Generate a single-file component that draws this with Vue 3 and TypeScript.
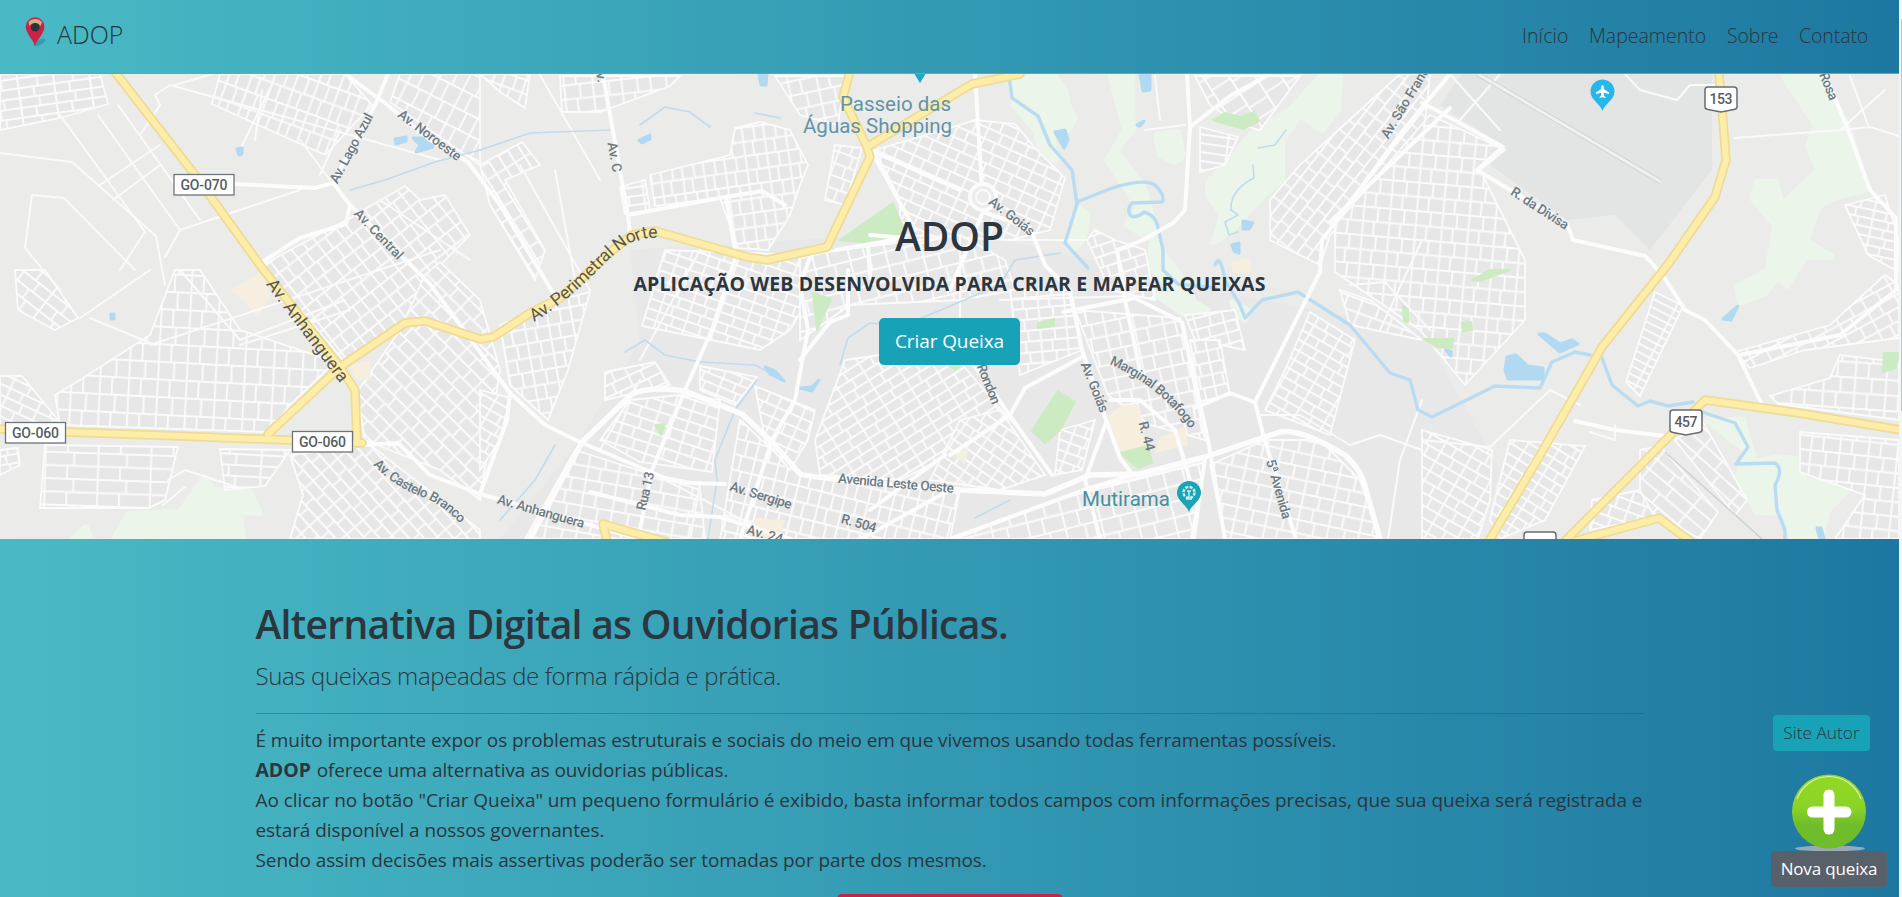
<script setup lang="ts">
interface District { pts: string; a: number; w: number; h: number }
interface Label { t: string; x: number; y: number; a: number; s?: number; len?: number; k?: string }

const links: { text: string; cls: string }[] = [
  { text: 'Início', cls: 'l1' },
  { text: 'Mapeamento', cls: 'l2' },
  { text: 'Sobre', cls: 'l3' },
  { text: 'Contato', cls: 'l4' },
]

const d = (pts: string, a: number, w: number, h: number): District => ({ pts, a, w, h })

// Neighbourhood blocks: outline, street direction and block size
const districts: District[] = [
  d('0,74 100,74 108,104 60,118 0,130', -8, 15, 9),
  d('220,74 345,74 372,105 325,155 212,104', 20, 9, 15),
  d('400,74 480,74 480,165 390,102', 27, 11, 17),
  d('262,265 350,218 405,186 420,200 445,195 470,235 425,280 400,330 345,362', -38, 10, 13),
  d('400,330 425,275 440,262 480,300 500,370 480,500 440,470 365,440 357,392', 45, 14, 11),
  d('175,270 200,270 240,330 335,362 290,405 268,432 60,425 55,395 80,380 150,335', 3, 12, 16),
  d('0,376 22,376 62,425 0,430', 25, 14, 9),
  d('0,450 18,448 20,465 0,475', -10, 9, 8),
  d('45,445 178,447 165,500 148,508 40,508', 2, 22, 12),
  d('220,449 290,450 265,486 225,490', 3, 23, 10),
  d('290,455 370,445 480,530 480,539 290,539 303,495', 48, 13, 10),
  d('15,270 45,270 78,318 55,330 18,310', 38, 15, 10),
  d('480,74 530,74 525,108 500,92', 20, 9, 12),
  d('560,76 680,76 670,86 600,112 562,112', -6, 12, 13),
  d('480,165 522,142 540,165 505,180 545,250 535,280 490,205', 58, 13, 10),
  d('650,175 730,155 735,128 760,122 790,130 808,165 800,185 790,215 768,250 738,248 720,198 655,206', -8, 9, 13),
  d('620,187 645,180 650,210 625,214', -8, 14, 8),
  d('775,76 845,76 838,125 800,115', -12, 12, 13),
  d('835,145 862,148 845,205 825,200', 20, 12, 11),
  d('875,150 960,125 975,120 1015,124 1035,148 1065,178 1050,230 1010,240 900,235 900,200', 24, 12, 10),
  d('1087,240 1095,230 1115,240 1145,250 1155,300 1110,290', -18, 12, 10),
  d('1195,76 1300,76 1260,130 1240,125 1210,105', 57, 13, 20),
  d('1200,127 1238,137 1225,165 1200,172', 8, 30, 8),
  d('1270,200 1300,165 1400,74 1430,74 1422,150 1330,235 1320,265 1270,240', -52, 13, 10),
  d('1335,225 1430,115 1505,150 1480,170 1525,260 1525,320 1465,385 1420,330 1335,272', 5, 11, 13),
  d('1310,312 1355,340 1330,435 1265,410 1285,370', 30, 12, 9),
  d('1265,440 1320,440 1360,480 1380,539 1225,539 1210,465', 12, 13, 12),
  d('665,250 800,255 825,270 790,330 760,350 642,326', 19, 12, 9),
  d('800,255 960,235 1005,260 1015,290 960,300 850,305 800,340', -14, 15, 13),
  d('845,360 880,355 960,362 1010,420 950,455 900,480 820,475 815,440', -32, 13, 9),
  d('960,420 1000,410 1045,475 1000,490 930,480', 35, 11, 9),
  d('1010,290 1068,290 1082,350 1020,375', -5, 11, 10),
  d('1075,310 1180,318 1205,440 1150,425 1108,395', -12, 12, 13),
  d('1185,315 1235,310 1245,350 1195,340', -15, 12, 10),
  d('1190,340 1220,340 1230,395 1200,402', -12, 10, 11),
  d('630,400 680,395 720,400 712,472 640,462 600,440', 18, 13, 10),
  d('740,420 800,475 960,490 950,539 720,539', 14, 10, 14),
  d('575,450 700,490 705,539 525,539', 10, 13, 12),
  d('500,325 560,300 590,292 568,370 548,420 510,385', -10, 10, 13),
  d('480,390 510,398 500,440 480,470', 30, 13, 9),
  d('605,372 655,362 670,385 605,400', -25, 13, 10),
  d('700,366 757,377 735,405 700,390', 22, 14, 8),
  d('755,386 815,410 808,440 790,470 765,440', 24, 11, 10),
  d('955,539 1085,490 1205,462 1195,539', -14, 15, 14),
  d('1060,430 1095,420 1082,470 1055,475', 20, 12, 9),
  d('1655,292 1683,306 1640,396 1626,382', 27, 26, 7),
  d('1735,352 1830,325 1885,275 1899,285 1899,338 1805,350 1750,368', -28, 13, 11),
  d('1770,396 1830,378 1840,355 1899,362 1899,420 1778,404', 4, 13, 14),
  d('1800,432 1899,440 1899,539 1835,539 1865,495 1800,472', 6, 12, 13),
  d('1845,205 1885,195 1899,240 1899,272 1868,255', 12, 13, 8),
  d('1422,430 1492,450 1490,500 1478,539 1422,539', 30, 12, 10),
  d('1510,440 1585,446 1545,520 1500,539 1490,520', 32, 12, 9),
  d('1640,450 1660,446 1718,512 1700,539 1640,505', 40, 24, 11),
  d('1675,440 1702,420 1747,500 1735,515', 42, 24, 11),
  d('1592,500 1640,490 1655,518 1590,530', 20, 12, 10),
  d('1370,300 1422,340 1350,325 1340,290', 20, 14, 12),
]

const avenues: string[] = [
  'M345 74L385 103L430 140L468 162L500 205L555 296',
  'M388 74L376 103L333 183L350 205L430 284L480 352L510 393L545 425L580 442L665 478L690 483L725 484',
  'M235 184L315 188L333 183',
  'M350 205L346 224L300 238L262 262',
  'M362 445L398 443L430 475L480 494L640 539',
  'M480 494L507 420L510 393',
  'M603 75L628 215L630 236',
  'M628 215L725 197L762 191L785 205',
  'M726 197L736 255L712 330L685 390L652 470L638 539',
  'M975 74L982 190M983 212L1030 228L1045 265L1070 290L1082 350L1106 420L1120 458L1132 474',
  'M870 150L960 190M872 152L915 230M983 212L950 290',
  'M836 250L905 238L870 235M868 245L870 275',
  'M812 252L800 285L808 330L795 400L772 440L740 539',
  'M848 270L848 315L830 322L800 360',
  'M1187 74L1190 127L1185 210L1173 223L1143 240L1117 250L1125 300L1140 370',
  'M1190 127L1230 96L1270 74',
  'M1450 74L1405 128L1322 240L1320 272L1255 402L1264 438L1296 539',
  'M1450 108L1330 222',
  'M1063 312L1135 298L1182 322L1208 440L1225 539',
  'M1254 402L1230 393L1195 408',
  'M1082 357L1025 388L1010 415L950 455',
  'M960 345L1052 475',
  'M1106 423L1085 480L1100 539M1110 400L1140 400L1175 430L1190 480',
  'M950 539L1090 488L1140 473M1205 460L1192 539',
  'M590 492L680 515L720 517L790 539',
  'M950 490L850 545M945 455L870 510',
  'M1422 103L1436 110L1503 147L1477 170L1567 224L1573 240L1645 256L1660 272',
  'M1662 274L1685 310L1705 320L1738 355L1762 405',
  'M1825 74L1850 135L1870 190L1896 218L1896 290L1840 335L1740 355',
  'M1575 421L1615 430L1665 436',
]

const lanes: string[] = [
  'M0 153L72 162L156 236L165 285M165 257L180 230L300 190M60 115L145 232M98 115L180 230M118 105L200 220M155 95L170 85L440 160',
  'M145 232L120 270M32 195L64 198L135 270M32 195L25 248L60 290M100 185L160 145M113 200L160 165',
  'M155 95L160 105L140 135M212 74L172 86M262 90L255 140M240 150L270 88',
  'M80 318L150 270M90 318L155 345',
  'M540 75L600 180M555 170L575 280M520 165L590 290',
  'M1145 130L1185 125M1155 76L1160 120',
  'M1350 285L1385 282L1430 330M1422 240L1380 330',
  'M1625 74L1640 90L1677 100L1690 85L1720 85',
  'M1735 138L1840 130L1870 127L1899 136M1850 76L1868 125M1885 90L1840 130',
  'M1422 440L1490 447L1550 390L1580 405M1590 432L1615 440L1615 425',
  'M1500 74L1460 120M1450 74L1500 130',
  'M300 140L330 180M320 175L340 130',
  'M1260 415L1300 415L1350 445L1380 435L1422 450M1388 539L1400 460L1422 400',
  'M168 480L185 470L240 488M163 505L185 487',
  'M600 450L640 380M665 480L780 539M700 484L690 539',
  'M380 200L470 260M180 270L240 340L345 300M240 345L350 310M150 345L440 250',
  'M700 250L640 360M960 235L960 330M1010 240L1085 240M1000 300L1130 296',
]

const highways: string[] = [
  'M115 72L195 175L262 268L340 367L355 390L357 443',
  'M0 429L66 432L180 436L362 443',
  'M268 434L340 367L405 323L425 321L480 339L493 337L530 313L560 298L613 250L632 235L655 231L747 257L767 260L827 247L870 157L867 147L843 97L850 72',
  'M867 147L960 91L972 84L1020 74',
  'M1719 74L1724 133L1726 160L1715 197L1669 263L1602 347L1589 370L1539 457L1489 541',
  'M1565 541L1640 466L1695 410L1705 400L1799 413L1901 430',
  'M1575 541L1659 518L1690 541',
  'M666 542L603 524L607 541',
]

const rivers: string[] = [
  'M1009 76L1012 98L1038 116L1050 145L1072 170L1077 204',
  'M1077 202L1112 188Q1145 178 1155 185Q1166 196 1162 202L1132 203Q1126 210 1131 216Q1138 218 1144 212Q1156 215 1158 228L1163 250L1163 270L1178 284L1215 288M1077 204L1065 243L1088 268',
  'M1215 265Q1220 252 1225 280L1240 305L1245 318L1262 300L1298 292L1350 325L1390 373L1410 380L1418 410L1432 417L1495 386L1540 388L1552 362L1575 352L1590 355',
  'M1602 358L1612 385L1638 406L1650 401L1668 406L1693 402M1702 412L1735 423L1748 447L1736 464L1775 463Q1784 469 1775 485L1777 510L1785 530V539',
]
const streams: string[] = [
  'M480 150L530 133L610 130M640 125L665 107L690 112L710 127M755 113L780 118',
  'M350 190L385 180L435 162L480 150',
  'M625 352L645 340L665 355L700 362L755 365L770 373M757 380L735 410L715 460L717 480L708 539',
  'M555 445L535 480L500 520M840 365L848 338L870 323L905 325L1000 285L1015 260L1060 253',
  'M1253 165L1254 178Q1230 190 1231 210L1238 215L1225 222L1229 235L1238 232M1286 130L1275 145L1258 148',
  'M975 518L1010 500',
]
const water: string[] = [
  '1055,132 1065,130 1068,140 1064,148', '1140,74 1150,74 1150,90 1143,91', '1243,221 1253,223 1249,229 1243,229',
  '1232,245 1239,243 1239,253 1234,251', '1507,357 1516,355 1528,366 1543,368 1543,379 1508,379 1505,370',
  '1539,334 1545,334 1560,344 1572,340 1578,344 1560,352', '1723,319 1738,306 1731,320',
  '1446,350 1451,352 1451,356', '1817,528 1821,528 1824,539 1820,539', '395,139 406,137 406,141 396,144',
  '413,138 426,138 431,143 433,147 416,152 420,145', '237,149 242,148 242,154 239,155', '111,314 114,314 114,319 111,319',
  '759,74 767,74 766,85 761,85', '639,140 650,135 650,139 642,143', '765,367 775,371 784,381 770,374', '800,388 812,387 819,380 812,391',
  '1137,125 1144,121 1140,126',
]
const parks: string[] = [
  '840,240 893,203 902,225 905,232 870,243', '813,293 831,299 817,330', '655,425 665,424 661,435',
  '1213,120 1225,113 1240,117 1254,112 1259,121 1243,129', '1038,323 1054,319 1054,326 1038,328',
  '1058,391 1075,402 1060,430 1045,443 1032,431', '1120,453 1148,446 1152,463 1138,468',
  '1472,280 1490,270 1510,270 1480,281', '1462,323 1471,322 1472,330 1463,331', '1424,339 1453,339 1452,348 1436,347',
  '1884,353 1899,353 1896,368 1883,372', '1403,306 1408,308 1408,322 1404,321', '950,366 960,365 956,370',
]
const meadows: string[] = [
  '1010,78 1055,76 1065,90 1068,105 1075,118 1068,130 1050,125 1056,160 1042,155 1035,130 1014,105',
  '1110,74 1132,74 1133,130 1116,150 1143,185 1152,215 1160,250 1188,285 1197,310 1180,300 1150,265 1152,240 1127,225 1138,207 1107,160 1125,130',
  '1156,135 1178,132 1183,155 1175,162 1160,155', '1208,182 1230,160 1250,135 1290,110 1320,77 1340,77 1338,110 1322,130 1300,115 1282,140 1282,180 1262,197 1230,232 1214,242 1222,215 1208,195',
  '1080,208 1088,215 1083,240 1075,248 1067,240', '1784,77 1820,77 1850,130 1866,190 1840,196 1820,205 1806,240 1832,257 1805,257 1787,286 1768,268 1775,225 1752,198 1757,182 1776,182 1782,205 1818,170 1808,145 1816,125',
  '1737,287 1765,272 1778,277 1765,293 1740,303', '1707,420 1743,420 1755,462 1780,457 1806,460 1803,482 1840,477 1848,490 1828,510 1820,539 1792,539 1785,513 1757,512 1737,480 1745,450',
  '73,539 86,527 90,539', '114,539 128,514 180,512 205,477 213,490 250,492 260,513 240,512 243,539', '1152,292 1190,300 1208,310 1200,320 1182,313',
  '1232,302 1248,310 1245,320 1237,315',
]
const sand: string[] = [
  '1107,417 1122,405 1138,405 1148,450 1118,453', '1160,437 1185,427 1188,445 1155,453', '230,290 262,272 270,295 258,318 245,302',
  '350,365 370,360 370,380 355,380', '755,518 785,520 780,539 750,535', '955,455 968,448 965,465', '1230,262 1250,258 1252,272 1234,274',
]

const labels: Label[] = [
  { t: 'Av. Lago Azul', x: 351, y: 148, a: -62, len: 77 },
  { t: 'Av. Noroeste', x: 430, y: 135, a: 37, len: 75 },
  { t: 'Av. Central', x: 379, y: 234, a: 46, len: 64 },
  { t: 'Av. C', x: 615, y: 157, a: 80, len: 30 },
  { t: 'Av.', x: 601, y: 73, a: 80, len: 19 },
  { t: 'Av. Goiás', x: 1012, y: 216, a: 38, len: 54 },
  { t: 'Av. São Francisco', x: 1411, y: 92, a: -59, len: 105 },
  { t: 'R. da Divisa', x: 1540, y: 208, a: 33, len: 66 },
  { t: 'Rosa', x: 1829, y: 86, a: 68, len: 29 },
  { t: 'Av. Anhanguera', x: 541, y: 511, a: 16, len: 90 },
  { t: 'Rua 13', x: 645, y: 491, a: -77, len: 39 },
  { t: 'Av. Sergipe', x: 761, y: 495, a: 17, len: 64 },
  { t: 'Avenida Leste Oeste', x: 896, y: 483, a: 5, len: 116 },
  { t: 'R. 504', x: 859, y: 523, a: 16, len: 36 },
  { t: 'Av. 24', x: 765, y: 534, a: 16, len: 37 },
  { t: 'Rondon', x: 989, y: 384, a: 68, len: 42 },
  { t: 'Av. Goiás', x: 1095, y: 387, a: 68, len: 53 },
  { t: 'R. 44', x: 1147, y: 436, a: 75, len: 30 },
  { t: '5ª Avenida', x: 1279, y: 489, a: 74, len: 61 },
  { t: 'Av. Anhanguera', x: 308, y: 330, a: 53, s: 17.5, len: 124, k: 'dark' },
]
const plates: { t: string; x: number; y: number }[] = [
  { t: 'GO-070', x: 174, y: 174.5 },
  { t: 'GO-060', x: 5.5, y: 422.5 },
  { t: 'GO-060', x: 292.5, y: 431.5 },
]
const shields: { t: string; x: number; y: number }[] = [
  { t: '153', x: 1705, y: 87 },
  { t: '457', x: 1670, y: 410 },
  { t: '', x: 1524, y: 532 },
]
</script>

<template>
  <div class="window">
    <div class="page">
      <header class="navbar">
        <a class="brand">
          <svg class="pin" width="30" height="32" viewBox="0 0 30 32">
            <ellipse cx="14.500" cy="25.500" rx="6.500" ry="2.500" transform="rotate(-28 14.500 25.500)" fill="#20819a" opacity=".5" />
            <path d="M10 29C8 22 .8 17 .8 9.500a9.300 9.300 0 0 1 18.600 0C19.400 17 12 22 10 29z" fill="#cb2347" />
            <path d="M3.500 5A9 9 0 0 1 17 5L15.500 9L13 6.500H7L4.500 9z" fill="#cfb183" />
            <circle cx="10.200" cy="10.200" r="4.300" fill="#26343d" />
          </svg>
          <span>ADOP</span>
        </a>
        <nav class="links">
          <a v-for="l in links" :key="l.text" :class="l.cls">{{ l.text }}</a>
        </nav>
      </header>

      <section class="hero">
        <svg class="map" viewBox="0 74 1899 465" width="1899" height="465">
          <defs>
            <pattern v-for="(b, i) in districts" :id="'g' + i" :key="i" :width="b.w * 2.4" :height="b.h * 2.2"
              patternUnits="userSpaceOnUse" :patternTransform="`rotate(${b.a})`">
              <rect :width="b.w * 2.4" :height="b.h * 2.2" fill="#e7e7e7" />
              <path :d="`M0 1H${b.w * 2.4}M0 ${b.h * 1.1 + 1}H${b.w * 2.4}M${b.w * 0.4} 0V${b.h * 2.2}M${b.w * 1.7} 0V${b.h * 1.1 + 1}M${b.w * 1.4} ${b.h * 1.1 + 1}V${b.h * 2.2}`"
                fill="none" stroke="#fbfbfb" stroke-width="1.9" />
            </pattern>
            <path id="perimetral" d="M534 322Q567 302 597 271T638 241Q648 236 668 239" />
            <path id="castelo" d="M373 465Q395 487 420 496T464 528" />
            <path id="botafogo" d="M1109 364Q1162 387 1192 432" />
          </defs>
          <rect y="74" width="1899" height="465" fill="#ebebea" />
          <path d="M630 250L960 230L1260 300L1422 330L1500 470L1480 539H500L580 440L640 340Z" fill="#e8e8e8" />
          <path d="M1462 74H1712V170L1650 250L1615 215L1567 220L1490 165L1505 147L1440 105Z" fill="#e3e5e5" />
          <polygon v-for="(p, i) in meadows" :key="'m' + i" :points="p" class="meadow" />
          <polygon v-for="(b, i) in districts" :key="'d' + i" :points="b.pts" :fill="`url(#g${i})`" class="block" />
          <polygon v-for="(p, i) in sand" :key="'s' + i" :points="p" fill="#f6efdf" />
          <polygon v-for="(p, i) in parks" :key="'p' + i" :points="p" class="park" />
          <path v-for="(p, i) in lanes" :key="'l' + i" :d="p" class="lane" />
          <path v-for="(p, i) in streams" :key="'t' + i" :d="p" class="stream" />
          <path v-for="(p, i) in rivers" :key="'r' + i" :d="p" class="river" />
          <polygon v-for="(p, i) in water" :key="'w' + i" :points="p" class="water" />
          <path v-for="(p, i) in avenues" :key="'a' + i" :d="p" class="avenue" />
          <circle cx="983" cy="197" r="13" fill="#ececec" stroke="#fbfbfb" stroke-width="4" />
          <circle cx="983" cy="197" r="7" fill="none" stroke="#fbfbfb" stroke-width="2" />
          <path d="M530 539L582 442L632 394Q650 386 685 391L742 414L772 442L800 474Q815 479 960 490L1045 494L1090 475L1140 474L1205 457L1280 432Q1300 428 1345 455Q1362 470 1366 490L1380 539" class="trunk" />
          <path d="M1478 74L1661 182" stroke="#cfd4d4" stroke-width="5" />
          <path d="M1478 74L1661 182" stroke="#eff0f0" stroke-width="3" />
          <path d="M1665 452L1762 539" stroke="#cdd2d4" stroke-width="1.500" />
          <path v-for="(p, i) in highways" :key="'he' + i" :d="p" class="highway-edge" />
          <path v-for="(p, i) in highways" :key="'h' + i" :d="p" class="highway" />

          <g v-for="(p, i) in plates" :key="'pl' + i">
            <rect :x="p.x" :y="p.y" width="60" height="20.500" fill="#fff" stroke="#6d7479" stroke-width="1.300" />
            <text :x="p.x + 30" :y="p.y + 15.500" class="plate" textLength="47">{{ p.t }}</text>
          </g>
          <g v-for="(s, i) in shields" :key="'sh' + i">
            <path :d="`M${s.x + 3} ${s.y}h26q3 0 3 3v17q0 2-3 2.500l-13 2.500l-13-2.500q-3-.5-3-2.500v-17q0-3 3-3z`"
              fill="#fff" stroke="#666c70" stroke-width="1.500" />
            <text v-if="s.t" :x="s.x + 16" :y="s.y + 17" class="plate" textLength="23">{{ s.t }}</text>
          </g>
          <text v-for="(l, i) in labels" :key="'lb' + i" :class="['label', l.k]" :font-size="l.s ?? 13.5" :textLength="l.len"
            :transform="`translate(${l.x} ${l.y}) rotate(${l.a})`" :dy="(l.s ?? 13.5) * 0.36">{{ l.t }}</text>
          <text class="curve dark" font-size="17.500"><textPath href="#perimetral" textLength="153">Av. Perimetral Norte</textPath></text>
          <text class="curve" font-size="13.500"><textPath href="#castelo" textLength="106">Av. Castelo Branco</textPath></text>
          <text class="curve" font-size="13.500"><textPath href="#botafogo" textLength="105">Marginal Botafogo</textPath></text>
          <text x="840" y="110.500" class="place" textLength="111">Passeio das</text>
          <text x="803" y="133" class="place" textLength="149">Águas Shopping</text>
          <text x="1082" y="505.500" class="place teal" textLength="88">Mutirama</text>

          <path d="M912 70h16l-8 13z" fill="#1fa9c8" />
          <path d="M1602.500 111c-2-7-12-11-12-19.500a12 12 0 0 1 24 0c0 8.500-10 12.500-12 19.500z" fill="#29b6ea" />
          <path d="M1602.500 85c1 0 1.300 1.500 1.300 4l5.200 3.500v1.500l-5.200-1.300v3l1.700 1.300v1l-3-.8l-3 .8v-1l1.700-1.300v-3l-5.200 1.300v-1.500l5.200-3.500c0-2.500.3-4 1.300-4z" fill="#fff" />
          <path d="M1189 512c-2-7-12-11-12-19a12 12 0 0 1 24 0c0 8-10 12-12 19z" fill="#1ba3b8" />
          <circle cx="1189" cy="492.500" r="5.500" fill="none" stroke="#cdeef2" stroke-width="2.500" stroke-dasharray="3 1.300" />
          <path d="M1189 491v7M1186 499h6M1187 491h4" stroke="#cdeef2" stroke-width="1.500" />
        </svg>
        <div class="hero-text">
          <h1>ADOP</h1>
          <p>APLICAÇÃO WEB DESENVOLVIDA PARA CRIAR E MAPEAR QUEIXAS</p>
          <button>Criar Queixa</button>
        </div>
      </section>

      <main class="about">
        <div class="container">
          <h2>Alternativa Digital as Ouvidorias Públicas.</h2>
          <p class="lead">Suas queixas mapeadas de forma rápida e prática.</p>
          <hr />
          <div class="copy">
            <p class="c1">É muito importante expor os problemas estruturais e sociais do meio em que vivemos usando todas ferramentas possíveis.</p>
            <p class="c2"><b>ADOP</b> oferece uma alternativa as ouvidorias públicas.</p>
            <p class="c3">Ao clicar no botão "Criar Queixa" um pequeno formulário é exibido, basta informar todos campos com informações precisas, que sua queixa será registrada e</p>
            <p class="c4">estará disponível a nossos governantes.</p>
            <p class="c5">Sendo assim decisões mais assertivas poderão ser tomadas por parte dos mesmos.</p>
          </div>
          <div class="cta"></div>
        </div>
      </main>

      <aside class="floating">
        <a class="author">Site Autor</a>
        <svg class="add" width="76" height="80" viewBox="0 0 76 80">
          <defs>
            <linearGradient id="lime" x1="0" y1="0" x2="0" y2="1">
              <stop offset="0" stop-color="#92d924" />
              <stop offset=".45" stop-color="#8bd326" />
              <stop offset=".68" stop-color="#70bd2b" />
              <stop offset="1" stop-color="#6fbd2c" />
            </linearGradient>
          </defs>
          <ellipse cx="39" cy="74.500" rx="35" ry="3" fill="#9aa9b3" />
          <circle cx="38" cy="37.500" r="37" fill="url(#lime)" />
          <path d="M6 25A34 34 0 0 1 70 25" fill="none" stroke="#dcefae" stroke-width="1.200" />
          <path d="M38 21V55M21.500 38H55" stroke="#fff" stroke-width="11" stroke-linecap="round" />
          <path d="M34 16.500h8v43h-8zM17 34h42v8h-42z" fill="#fff" />
        </svg>
        <span class="tip">Nova queixa</span>
      </aside>
    </div>
    <div class="scroll"><div class="thumb"></div></div>
  </div>
</template>

<style>
body { margin: 0; background: #f1f1f1; }
</style>

<style scoped>
.window {
  width: 1902px; height: 897px; display: flex; overflow: hidden;
  font-family: "Open Sans", "Noto Sans", sans-serif; font-size: 19px; color: #2b363e;
}
.page { position: relative; width: 1899px; height: 897px; overflow: hidden; }
.scroll { width: 3px; background: #f4f5f5; padding-top: 19px; box-sizing: border-box; }
.thumb { width: 1px; height: 392px; margin-left: 2px; background: #c1c5c7; }
h1, h2, p { margin: 0; white-space: nowrap; }
.navbar {
  height: 74px; box-sizing: border-box; border-bottom: 1px solid #7f9da5; padding: 0 31px 0 25px;
  background: linear-gradient(to right, #49bac5, #1d78a1);
  display: flex; justify-content: space-between; align-items: flex-start;
}
.brand { display: flex; font-size: 25px; font-weight: 350; line-height: 34px; padding-top: 17px; color: #28353b; }
.pin { margin-right: 2px; }
.links { display: flex; gap: 21px; font-weight: 350; font-size: 19.5px; line-height: 30px; padding-top: 21px; }
.links a { white-space: nowrap; }
.l1 { width: 46px; letter-spacing: .1px; }
.l2 { width: 117px; }
.l3 { width: 51px; letter-spacing: -.1px; }
.l4 { width: 69px; letter-spacing: -.1px; }
.hero { position: relative; height: 465px; }
.map { display: block; }
.hero-text {
  position: absolute; inset: 0; display: flex; flex-direction: column; align-items: center;
}
h1 { font-size: 39px; font-weight: 600; line-height: 48px; margin-top: 138px; }
.hero-text p { font-size: 19.5px; font-weight: 700; line-height: 30px; margin-top: 9px; letter-spacing: .13px; }
button {
  width: 141px; height: 47px; margin-top: 19px; padding: 0; border: 0; border-radius: 5px;
  background: #18a2b8; color: #fff; font: 400 19px/47px "Open Sans", sans-serif; letter-spacing: -.1px;
}
.about { height: 358px; background: linear-gradient(to right, #49bac5, #1d78a1); }
.container { width: 1388px; margin: 0 auto; padding-top: 61px; }
h2 { font-size: 39px; font-weight: 600; line-height: 48px; letter-spacing: -.7px; }
.lead { font-size: 24px; font-weight: 300; line-height: 38px; margin-top: 9px; letter-spacing: -.38px; }
hr { border: 0; border-top: 1px solid rgba(15, 95, 130, .45); margin: 18px 0 11px; }
.copy p { line-height: 30px; letter-spacing: -.09px; }
.copy .c3 { letter-spacing: -.065px; }
.copy b { font-size: 19.5px; margin-right: 1px; }
.cta { width: 226px; height: 20px; margin: 19px auto 0; border-radius: 5px; background: #cb2347; }
.floating { position: absolute; right: 12px; top: 715px; width: 116px; }
.author {
  display: block; width: 97px; height: 36px; margin-left: 2px; border-radius: 4px; text-align: center;
  background: #18a2b8; font-size: 17.3px; font-weight: 350; line-height: 36px;
}
.add { display: block; margin: 23px 0 0 20px; }
.tip {
  position: relative; display: block; height: 36px; margin-top: -3px; border-radius: 4px; background: #58606a; color: #fff;
  font-size: 17px; line-height: 36px; text-align: center; white-space: nowrap; letter-spacing: -.15px;
}
.block { stroke: #fbfbfb; stroke-width: 1.8; }
.meadow { fill: #ebf5e9; stroke: #ebf5e9; stroke-width: 6; stroke-linejoin: round; }
.park { fill: #cdebc2; stroke: #cdebc2; stroke-width: 2; stroke-linejoin: round; }
.water { fill: #b1d9f2; stroke: #b1d9f2; stroke-width: 3; stroke-linejoin: round; }
.lane, .avenue, .trunk, .stream, .river, .highway, .highway-edge { fill: none; stroke-linejoin: round; stroke-linecap: round; }
.lane { stroke: #fafafa; stroke-width: 2; }
.avenue { stroke: #fcfcfc; stroke-width: 4; }
.trunk { stroke: #fcfcfc; stroke-width: 5.5; }
.stream { stroke: #c0dcec; stroke-width: 1.6; }
.river { stroke: #b9dcf2; stroke-width: 3.4; }
.highway-edge { stroke: #eddc96; stroke-width: 9.5; }
.highway { stroke: #feeda8; stroke-width: 6; }
.label, .curve, .plate, .place { font-family: Roboto, sans-serif; }
.label { text-anchor: middle; fill: #6d7a82; font-weight: 500; }
.curve { fill: #6d7a82; font-weight: 500; }
.dark { fill: #5a574c; font-weight: 400; }
.plate { text-anchor: middle; font-size: 14px; font-weight: 500; fill: #565d62; }
.place { font-size: 20.5px; fill: #6294a6; }
.teal { fill: #4690a0; }
</style>
